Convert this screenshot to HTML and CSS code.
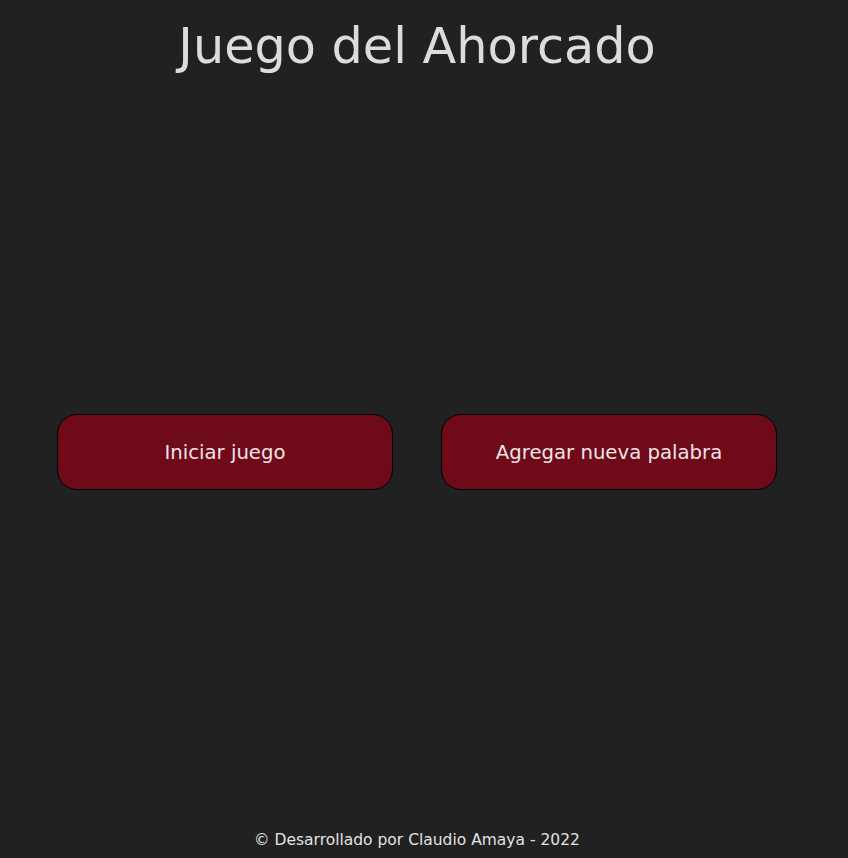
FILE: index.html
```html
<!DOCTYPE html>
<html lang="es">
<head>
<meta charset="utf-8">
<title>Juego del Ahorcado</title>
<link rel="stylesheet" href="styles.css">
</head>
<body>
<div class="page">
  <header class="header">
    <h1 class="title">Juego del Ahorcado</h1>
  </header>
  <main class="main">
    <div class="actions">
      <button class="btn">Iniciar juego</button>
      <button class="btn">Agregar nueva palabra</button>
    </div>
  </main>
  <footer class="footer">© Desarrollado por Claudio Amaya - 2022</footer>
</div>
</body>
</html>
```
FILE: styles.css
```css
html, body {
  margin: 0;
  padding: 0;
  background: #212121;
}
.page {
  height: 858px;
  display: flex;
  flex-direction: column;
  font-family: "DejaVu Sans", "Noto Sans", sans-serif;
  color: #e0e0e0;
}
.header {
  height: 95px;
  display: flex;
  justify-content: center;
}
.title {
  margin: 17px 0 0 -14px;
  font-size: 49.3px;
  font-weight: 400;
  line-height: 58px;
  color: #dcdcdc;
}
.main {
  flex: 1;
  display: flex;
  align-items: center;
  padding-bottom: 13px;
}
.actions {
  display: flex;
  gap: 48px;
  padding-left: 57px;
}
.btn {
  width: 336px;
  height: 76px;
  border: 1px solid #000;
  border-radius: 20px;
  background: #6f0a19;
  color: #f0e4e8;
  font-family: inherit;
  font-size: 19.7px;
  font-weight: 400;
  cursor: pointer;
}
.footer {
  height: 36px;
  display: flex;
  justify-content: center;
  align-items: center;
  font-size: 15.5px;
  color: #e2e2e2;
  padding-right: 14px;
}
```
